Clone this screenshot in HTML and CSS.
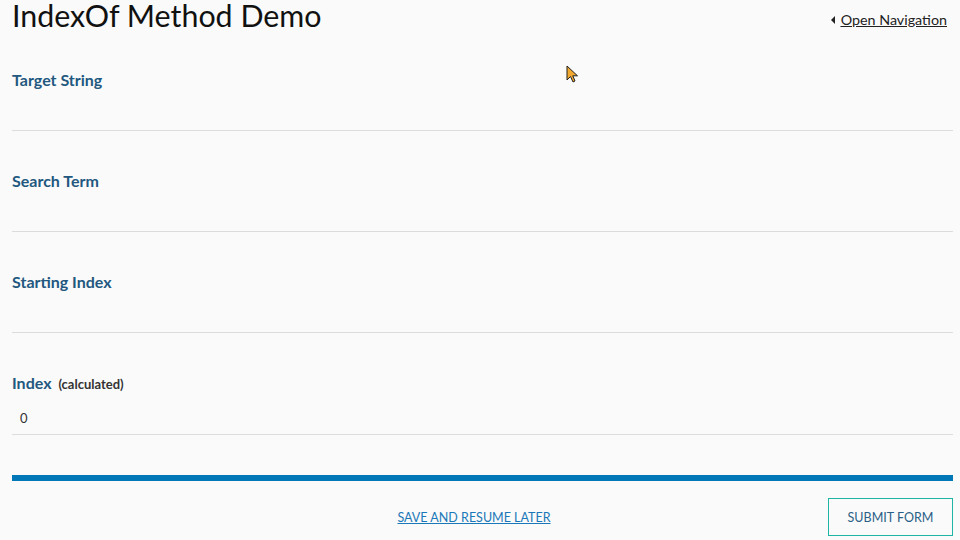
FILE: index.html
```html
<!DOCTYPE html>
<html>
<head>
<meta charset="utf-8">
<link rel="stylesheet" href="styles.css">
</head>
<body>
<div class="page">
  <header class="header">
    <h1 class="title">IndexOf Method Demo</h1>
    <a class="nav-link" href="#"><span class="tri"></span><span class="nav-text">Open Navigation</span></a>
  </header>
  <div class="field">
    <div class="label">Target String</div>
  </div>
  <div class="field">
    <div class="label">Search Term</div>
  </div>
  <div class="field">
    <div class="label">Starting Index</div>
  </div>
  <div class="field field-calc">
    <div class="label">Index <span class="calc">(calculated)</span></div>
    <div class="value">0</div>
  </div>
  <div class="bar"></div>
  <footer class="footer">
    <a class="save" href="#">SAVE AND RESUME LATER</a>
    <button class="submit">SUBMIT FORM</button>
  </footer>
  <svg class="cursor" width="14" height="20" viewBox="0 0 14 20">
    <path d="M1 1 L1 15 L4.5 11.5 L7 17 L9 16 L6.8 10.8 L11.5 10.8 Z" fill="#f0a830" stroke="#222" stroke-width="1"/>
  </svg>
</div>
</body>
</html>
```
FILE: styles.css
```css
html, body {
  margin: 0;
  padding: 0;
  background: #fafafa;
}
body {
  font-family: Lato, "Open Sans", sans-serif;
  color: #222;
}
.page {
  position: relative;
  padding: 0 7px 0 12px;
}
.header {
  height: 30px;
  display: flex;
  justify-content: space-between;
  align-items: flex-start;
}
.title {
  margin: 0;
  padding-top: 1px;
  font-size: 30.4px;
  line-height: 29px;
  font-weight: 400;
  color: #111;
}
.nav-link {
  display: flex;
  align-items: center;
  margin-top: 10px;
  margin-right: 6px;
  color: #222;
  font-size: 14.3px;
  line-height: 20px;
}
.tri {
  width: 0;
  height: 0;
  border-top: 4px solid transparent;
  border-bottom: 4px solid transparent;
  border-right: 4px solid #222;
  margin-right: 6px;
}
.nav-text {
  text-decoration: underline;
}
.field {
  box-sizing: border-box;
  height: 101px;
  padding-top: 40px;
  border-bottom: 1px solid #dcdcdc;
}
.field-calc {
  height: 102px;
}
.label {
  font-size: 16px;
  line-height: 20px;
  font-weight: 700;
  color: #22587f;
}
.calc {
  font-size: 13px;
  color: #333;
  margin-left: 3px;
}
.value {
  margin-top: 14px;
  padding-left: 8px;
  font-size: 13px;
  line-height: 20px;
  color: #333;
}
.bar {
  margin-top: 40px;
  height: 6px;
  background: #0077b6;
}
.footer {
  display: grid;
  grid-template-columns: 1fr auto 1fr;
  align-items: center;
  margin-top: 17px;
}
.save {
  grid-column: 2;
  margin-right: 17px;
  font-size: 12.5px;
  color: #1a78b8;
  text-decoration: underline;
}
.submit {
  grid-column: 3;
  justify-self: end;
  width: 125px;
  height: 38px;
  background: transparent;
  border: 1px solid #1fb5a5;
  color: #2a5f86;
  font-family: Lato, sans-serif;
  font-size: 12.5px;
  padding: 0;
}
.cursor {
  position: absolute;
  left: 566px;
  top: 65px;
}
```
